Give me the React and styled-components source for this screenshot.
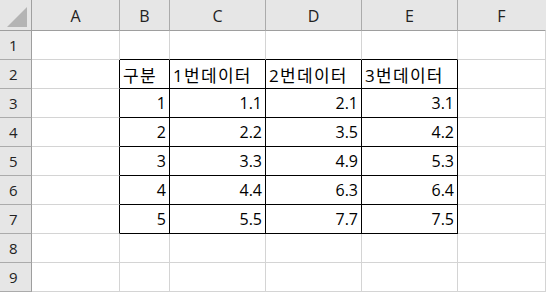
import React from 'react'
import styled, { createGlobalStyle } from 'styled-components'

const GlobalStyle = createGlobalStyle`
  html, body {
    margin: 0;
    padding: 0;
    background: #ffffff;
  }
`

const GRID = '#d4d4d4'
const INK = '#000000'

const Sheet = styled.div`
  display: grid;
  grid-template-columns: 32px 88px 50px 96px 96px 96px 88px;
  grid-template-rows: 31px repeat(9, 29px);
  width: 547px;
  height: 292px;
  font-family: "Open Sans", "Noto Sans CJK KR", sans-serif;
  font-size: 15px;
  color: #000;
  overflow: hidden;
`

const Corner = styled.div`
  background: #e6e6e6;
  border-right: 1px solid #a0a0a0;
  border-bottom: 1px solid #9e9e9e;
  box-sizing: border-box;
  display: flex;
  align-items: flex-end;
  justify-content: flex-end;
  padding: 0 4px 3px 0;
`

const ColHead = styled.div`
  background: #e6e6e6;
  box-sizing: border-box;
  border-bottom: 1px solid #9e9e9e;
  border-right: 1px solid ${({ $last }) => ($last ? '#e6e6e6' : '#ababab')};
  display: flex;
  align-items: center;
  justify-content: center;
  padding-top: 2px;
  color: #222;
  font-size: 16px;
`

const RowHead = styled.div`
  background: #e6e6e6;
  box-sizing: border-box;
  border-right: 1px solid #9e9e9e;
  border-bottom: 1px solid #ababab;
  display: flex;
  align-items: center;
  padding-left: 9px;
  color: #222;
  font-size: 15px;
`

const Cell = styled.div`
  box-sizing: border-box;
  border-right: 1px solid ${({ $right }) => $right};
  border-bottom: 1px solid ${({ $bottom }) => $bottom};
  display: flex;
  align-items: center;
  justify-content: ${({ $num }) => ($num ? 'flex-end' : 'flex-start')};
  padding: 0 3px 0 3px;
  white-space: nowrap;
  overflow: hidden;
  font-size: ${({ $num }) => ($num ? '16px' : '17px')};
  letter-spacing: ${({ $num }) => ($num ? '0' : '1.3px')};
`

const cols = ['A', 'B', 'C', 'D', 'E', 'F']

const data = {
  2: ['구분', '1번데이터', '2번데이터', '3번데이터'],
  3: [1, '1.1', '2.1', '3.1'],
  4: [2, '2.2', '3.5', '4.2'],
  5: [3, '3.3', '4.9', '5.3'],
  6: [4, '4.4', '6.3', '6.4'],
  7: [5, '5.5', '7.7', '7.5'],
}

// table B2:E7 gets black borders
const inTable = (r, c) => r >= 2 && r <= 7 && c >= 1 && c <= 4

const cellValue = (r, c) => (data[r] && c >= 1 && c <= 4 ? data[r][c - 1] : '')

const App = () => {
  const rows = [1, 2, 3, 4, 5, 6, 7, 8, 9]
  return (
    <>
      <GlobalStyle />
      <Sheet>
        <Corner>
          <svg width="20" height="20" viewBox="0 0 20 20">
            <polygon points="20,0 20,20 0,20" fill="#b4b4b4" />
          </svg>
        </Corner>
        {cols.map((c, i) => (
          <ColHead key={c} $last={i === cols.length - 1}>{c}</ColHead>
        ))}
        {rows.map((r) => (
          <React.Fragment key={r}>
            <RowHead>{r}</RowHead>
            {cols.map((_, c) => {
              const right = inTable(r, c) || inTable(r, c + 1) ? INK : GRID
              const bottom = inTable(r, c) || inTable(r + 1, c) ? INK : GRID
              const v = cellValue(r, c)
              return (
                <Cell key={c} $right={right} $bottom={bottom} $num={r > 2}>
                  {v}
                </Cell>
              )
            })}
          </React.Fragment>
        ))}
      </Sheet>
    </>
  )
}

export default App
